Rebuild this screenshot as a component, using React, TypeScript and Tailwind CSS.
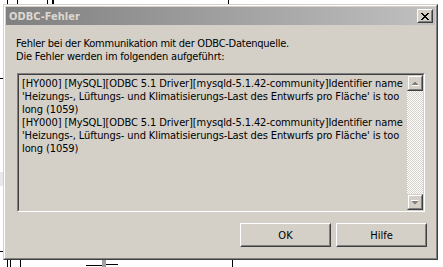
import React from 'react'

const FONT = { fontFamily: '"DejaVu Sans Condensed", "Liberation Sans", sans-serif' }

const errorLines = [
  '[HY000] [MySQL][ODBC 5.1 Driver][mysqld-5.1.42-community]Identifier name',
  "'Heizungs-, Lüftungs- und Klimatisierungs-Last des Entwurfs pro Fläche' is too",
  'long (1059)',
  '[HY000] [MySQL][ODBC 5.1 Driver][mysqld-5.1.42-community]Identifier name',
  "'Heizungs-, Lüftungs- und Klimatisierungs-Last des Entwurfs pro Fläche' is too",
  'long (1059)',
]

// disabled scroll arrow, grey glyph with white emboss
const ScrollArrow: React.FC<{ down?: boolean }> = ({ down }) => (
  <div className="w-[16px] h-[16px] border border-t-[#d4d0c8] border-l-[#d4d0c8] border-r-[#404040] border-b-[#404040]">
    <div className="w-full h-full border border-t-white border-l-white border-r-[#808080] border-b-[#808080] bg-[#d4d0c8] flex items-center justify-center">
      <svg width="8" height="5" viewBox="0 0 8 5" className={down ? 'rotate-180' : ''} shapeRendering="crispEdges">
        <path d="M4 0.5 L7.5 4 L0.5 4 Z" fill="#808080" />
        <path d="M1 4.5 H8" stroke="#ffffff" strokeWidth="1" />
      </svg>
    </div>
  </div>
)

const Button: React.FC<{ label: string }> = ({ label }) => (
  <div className="w-[91px] h-[24px] border border-t-white border-l-white border-r-[#404040] border-b-[#404040]">
    <div className="w-full h-full border border-t-[#d4d0c8] border-l-[#d4d0c8] border-r-[#808080] border-b-[#808080] bg-[#d4d0c8] flex items-center justify-center text-[11px] text-black">
      {label}
    </div>
  </div>
)

// bits of the drawing that peek out behind the dialog
const Backdrop: React.FC = () => (
  <svg className="absolute inset-0" width="443" height="267" shapeRendering="crispEdges">
    <g stroke="#000" strokeWidth="1">
      <path d="M7.5 0V4M17.5 0V4M47.5 0V4M52.5 0V4M53.5 0V4M228.5 0V4" />
      <path d="M0 78.5H3M0 251.5H3" />
      <path d="M7.5 260V267M10.5 260V267M20.5 260V267M232.5 260V267" />
      <path d="M86 265.5H102M106 264.5H118" />
    </g>
    <rect x="0" y="172" width="3" height="14" fill="#e8e8e8" />
    <rect x="102" y="260" width="4" height="7" fill="#a0a0a0" />
  </svg>
)

const App: React.FC = () => {
  return (
    <div className="relative w-[443px] h-[267px] bg-white overflow-hidden" style={FONT}>
      <Backdrop />

      {/* dialog */}
      <div className="relative ml-[3px] mt-[4px] w-[435px] h-[256px] border border-t-[#d4d0c8] border-l-[#d4d0c8] border-r-[#404040] border-b-[#404040]">
        <div className="w-full h-full border border-t-white border-l-white border-r-[#808080] border-b-[#808080] bg-[#d4d0c8] p-px flex flex-col">
          <div className="h-[18px] flex items-center justify-between pl-[3px] pr-[2px] bg-gradient-to-r from-[#808080] to-[#c0c0c0]">
            <span className="text-[11px] font-bold text-[#dcd8d0] leading-none">ODBC-Fehler</span>
            <div className="w-[16px] h-[14px] border border-t-white border-l-white border-r-[#404040] border-b-[#404040]">
              <div className="w-full h-full border border-t-[#d4d0c8] border-l-[#d4d0c8] border-r-[#808080] border-b-[#808080] bg-[#d4d0c8] flex items-center justify-center">
                <svg width="8" height="7" viewBox="0 0 8 7" shapeRendering="crispEdges">
                  <path d="M0 0h2v1h-2zM6 0h2v1h-2zM1 1h2v1h-2zM5 1h2v1h-2zM2 2h4v1h-4zM3 3h2v1h-2zM2 4h4v1h-4zM1 5h2v1h-2zM5 5h2v1h-2zM0 6h2v1h-2zM6 6h2v1h-2z" fill="#000" />
                </svg>
              </div>
            </div>
          </div>

          <div className="flex flex-col pl-[10px] text-[11px] leading-[13px] text-black">
            <div className="mt-[12px] tracking-[-0.25px]">Fehler bei der Kommunikation mit der ODBC-Datenquelle.</div>
            <div className="tracking-[-0.2px]">Die Fehler werden im folgenden aufgeführt:</div>

            <div className="mt-[10px] ml-px w-[408px] h-[139px] border border-t-[#808080] border-l-[#808080] border-r-white border-b-white">
              <div className="w-full h-full border border-t-[#404040] border-l-[#404040] border-r-[#d4d0c8] border-b-[#d4d0c8] flex">
                <div className="flex-1 pl-[3px] pt-[2px] tracking-[-0.1px]">
                  {errorLines.map((l, i) => (
                    <div key={i} className="whitespace-nowrap">{l}</div>
                  ))}
                </div>
                <div className="w-[16px] flex flex-col bg-[repeating-conic-gradient(#ffffff_0_25%,#d4d0c8_0_50%)] bg-[length:2px_2px]">
                  <ScrollArrow />
                  <div className="flex-1" />
                  <ScrollArrow down />
                </div>
              </div>
            </div>

            <div className="mt-[11px] flex justify-end gap-[5px] pr-[8px]">
              <Button label="OK" />
              <Button label="Hilfe" />
            </div>
          </div>
        </div>
      </div>
    </div>
  )
}

export default App
